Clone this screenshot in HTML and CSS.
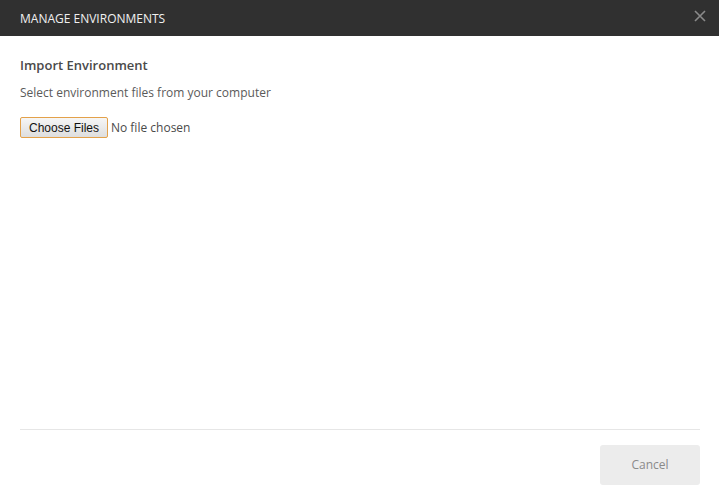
FILE: index.html
```html
<!DOCTYPE html>
<html>
<head>
<meta charset="utf-8">
<link rel="stylesheet" href="styles.css">
</head>
<body>
<div class="modal">
  <header class="modal-header">
    <span class="modal-title">MANAGE ENVIRONMENTS</span>
    <span class="close-btn" aria-label="Close">
      <svg width="12" height="12" viewBox="0 0 12 12"><path d="M1 1L11 11M11 1L1 11" stroke="#8a8a8a" stroke-width="1.6" fill="none"/></svg>
    </span>
  </header>
  <main class="modal-body">
    <h2 class="section-title">Import Environment</h2>
    <p class="section-desc">Select environment files from your computer</p>
    <div class="file-input">
      <span class="file-btn">Choose Files</span>
      <span class="file-status">No file chosen</span>
    </div>
  </main>
  <footer class="modal-footer">
    <button class="cancel-btn">Cancel</button>
  </footer>
</div>
</body>
</html>
```
FILE: styles.css
```css
* { box-sizing: border-box; }
html, body { margin: 0; padding: 0; background: #fff; }
body { font-family: "Open Sans", sans-serif; width: 719px; height: 503px; overflow: hidden; }
.modal { display: flex; flex-direction: column; height: 503px; }
.modal-header {
  height: 36px; background: #303030; display: flex; align-items: center;
  justify-content: space-between; padding: 0 13px 0 20px;
}
.modal-title { color: #f0f0f0; font-size: 12px; letter-spacing: 0; }
.close-btn { display: flex; width: 12px; height: 12px; margin-top: -4px; }
.modal-body { flex: 1; padding: 20px 20px 0 20px; }
.section-title { margin: 0; font-size: 13px; font-weight: 600; color: #4a4a4a; line-height: 18px; }
.section-desc { margin: 11px 0 0 0; font-size: 12px; color: #5a5a5a; line-height: 16px; }
.file-input { display: flex; align-items: center; margin-top: 16px; }
.file-btn {
  font-family: "Liberation Sans", Arial, sans-serif; font-size: 12px; color: #111;
  height: 21px; width: 88px; display: flex; align-items: center; justify-content: center;
  border: 1px solid #e3a14a; border-radius: 2px;
  background: linear-gradient(#f6f6f6, #dedede);
}
.file-status { margin-left: 3px; font-size: 12px; color: #4a4a4a; }
.modal-footer {
  margin: 0 19px 0 20px; border-top: 1px solid #e6e6e6; height: 74px;
  display: flex; justify-content: flex-end; align-items: flex-start; padding-top: 15px;
}
.cancel-btn {
  width: 100px; height: 40px; border: none; border-radius: 3px; background: #ececec;
  font-family: "Open Sans", sans-serif; font-size: 12px; color: #8a8a8a; padding: 0 0 2px 0;
}
```
